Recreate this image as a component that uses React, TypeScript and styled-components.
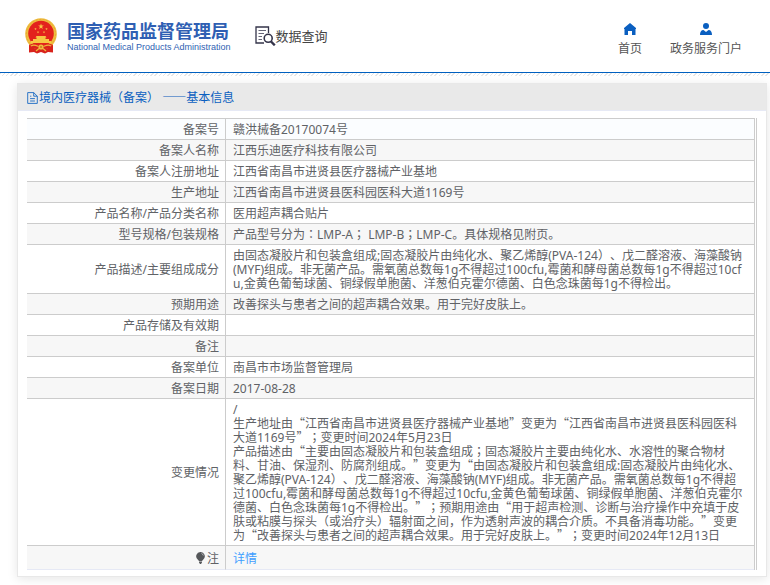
import React from "react";
import styled, { createGlobalStyle } from "styled-components";

const GlobalStyle = createGlobalStyle`
  * { box-sizing: border-box; }
  body {
    margin: 0;
    background: #fff;
    color: #606266;
    font-family: "Noto Sans", "Noto Sans CJK SC", sans-serif;
    font-size: 12px;
    line-height: 14px;
    text-spacing-trim: space-all;
  }
`;

const Header = styled.header`
  display: flex;
  align-items: center;
  height: 73px;
  padding: 0 28px 0 24px;
  border-bottom: 1px solid #0060c0;
`;

const Hatch = styled.div`
  height: 3px;
  background: repeating-linear-gradient(135deg, #e6e6e6 0 1px, #fff 1px 3px);
`;

const Brand = styled.a`
  display: flex;
  align-items: center;
  gap: 9px;
  color: #2f5fb3;
  text-decoration: none;
`;

const BrandText = styled.span`
  display: flex;
  flex-direction: column;
  padding-top: 2px;
  white-space: nowrap;
`;

const BrandName = styled.span`
  font: bold 18px/20px "Noto Sans CJK SC", sans-serif;
`;

const BrandLatin = styled.span`
  font: normal 9px/14px "Liberation Sans", sans-serif;
`;

const Section = styled.h1`
  display: flex;
  align-items: center;
  margin: 0 0 0 24px;
  color: #444;
  font: normal 13px/20px "Noto Sans CJK SC", sans-serif;
  white-space: nowrap;
`;

const Nav = styled.nav`
  display: flex;
  gap: 28px;
  margin: 6px 0 0 auto;
`;

const NavLink = styled.a`
  display: flex;
  flex-direction: column;
  align-items: center;
  gap: 7px;
  color: #555;
  text-decoration: none;
  white-space: nowrap;
`;

const Card = styled.main`
  margin: 7px 3px 8px 17px;
  border: 1px solid #e8e8e8;
  box-shadow: 0 2px 10px rgba(0, 0, 0, 0.1);
`;

const CardTitle = styled.h2`
  display: flex;
  align-items: center;
  gap: 1px;
  height: 27px;
  margin: 0;
  padding: 2px 9px 0;
  background: #e9e9e9;
  border-bottom: 1px solid #e6e9f5;
  color: #0a5fc0;
  font-size: 12px;
  font-weight: normal;
`;

const TableFrame = styled.div`
  margin: 7px 9px 6px;
  padding-right: 1px;
  border-right: 1px solid #ccc;
`;

const Table = styled.table`
  width: 100%;
  table-layout: fixed;
  border-spacing: 0;
  border-top: 1px solid #ccc;
  border-right: 1px solid #ccc;
`;

const Row = styled.tr`
  &:nth-child(even) { background: #f7f7f7; }
  &:first-child { background: #fbfdff; }
  &:last-child > * { height: 24px; border-bottom-color: #e6e9f5; }
`;

const Label = styled.th`
  width: 199px;
  height: 21px;
  padding: 4px 6px 2px;
  border-right: 1px solid #ccc;
  border-bottom: 1px solid #ccc;
  font-weight: normal;
  text-align: right;
`;

const Value = styled.td`
  padding: 4px 6px 2px 7px;
  border-bottom: 1px solid #ccc;
  word-break: break-all;
  white-space: pre-line;
`;

const DetailLink = styled.a`
  color: #409eff;
  text-decoration: none;
`;

const Quote = styled.span`
  font-family: "Noto Sans CJK SC", sans-serif;
  line-height: 0;
`;

const Centered = styled.span`
  font-family: "Noto Sans CJK TC", sans-serif;
  line-height: 0;
`;

// Full-width quotes and centred colons come from the CJK faces.
function Prose({ text }: { text: string }) {
  return (
    <>
      {text.split(/([“”—]+|[：；])/).map((part, i) => {
        if (i % 2 === 0) return part;
        return /[“”—]/.test(part) ? (
          <Quote key={i} lang="zh-CN">{part}</Quote>
        ) : (
          <Centered key={i} lang="zh-TW">{part}</Centered>
        );
      })}
    </>
  );
}

const STAR = "M0-1 .23-.31.95-.31.37.12.59.81 0 .38-.59.81-.37.12-.95-.31-.23-.31Z";

const Emblem = () => (
  <svg width="34" height="36" viewBox="0 0 34 36" aria-hidden="true">
    <path d="M5 24 5 34.5l5-.5 3 1.5 4-1.5 4 1.5 3-1.5 5 .5V24Z" fill="#d9231c" />
    <circle cx="17" cy="16" r="15.8" fill="#efbd3e" />
    <circle cx="17" cy="16" r="14.6" fill="none" stroke="#dfa232" strokeWidth=".7" strokeDasharray="2 1.5" />
    <circle cx="17" cy="15.5" r="12.8" fill="#e3221d" />
    <g fill="#f7c744">
      <path d={STAR} transform="translate(17 8.5) scale(3)" />
      <path d={STAR} transform="translate(11.5 11) scale(1.3)" />
      <path d={STAR} transform="translate(14 14.2) scale(1.3)" />
      <path d={STAR} transform="translate(20 14.2) scale(1.3)" />
      <path d={STAR} transform="translate(22.5 11) scale(1.3)" />
      <path d="M12.5 18h9l1 1.5h-11ZM12.5 19.5h9V21h3.5v2H9v-2h3.5ZM7 23h20v2H7Z" />
    </g>
    <path d="M6 26.5c4-2 6 0 8 1h6c2-1 4-3 8-1l-1 6-4-2-3 3h-6l-3-3-4 2Z" fill="#d9231c" />
    <path d="M7 28c3-2 5-.5 7.5.5M27 28c-3-2-5-.5-7.5.5M12 33l3-2.5M22 33l-3-2.5" fill="none" stroke="#f0b53b" strokeWidth="1.3" />
    <circle cx="17" cy="29" r="2.6" fill="#efbd3e" />
    <circle cx="17" cy="29" r="1" fill="#c9781f" />
  </svg>
);

const SearchDocIcon = () => (
  <svg width="21" height="20" viewBox="0 0 21 20" fill="none" stroke="#34344a" aria-hidden="true">
    <path d="M13.5 7V1H1v16h8" strokeWidth="1.3" />
    <path d="M3.5 4.5h7.5M3.5 7.5H9M3.5 10.5H7M3.5 13.5H7" stroke="#666678" />
    <circle cx="13.2" cy="12.3" r="4" strokeWidth="1.6" />
    <path d="m16 15.5 3.8 3.8" strokeWidth="2.4" />
  </svg>
);

const HomeIcon = () => (
  <svg width="12" height="12" viewBox="0 0 12 12" fill="#0a5fc0" aria-hidden="true">
    <path d="M6 0 0 5v1h.5v6H4V8h4v4h3.5V6h.5V5Z" />
  </svg>
);

const UserIcon = () => (
  <svg width="12" height="12" viewBox="0 0 12 12" fill="#0a5fc0" aria-hidden="true">
    <circle cx="6" cy="3" r="3" />
    <path d="M0 12c0-3 1-5 3.5-5L6 9l2.5-2C11 7 12 9 12 12Z" />
  </svg>
);

const DocIcon = () => (
  <svg width="11" height="12" viewBox="1 1 9 10" fill="none" stroke="#0a5fc0" aria-hidden="true">
    <path d="M1.5 1.5h5l3 3v6h-8ZM6.5 1.5v3h3M3.5 6.5h4M3.5 8.5h4M3.5 4.5h1" strokeWidth=".7" />
  </svg>
);

const BulbMark = styled.svg`
  margin-right: 2px;
  vertical-align: -1px;
`;

const BulbIcon = () => (
  <BulbMark width="9" height="12" viewBox="0 0 9 12" fill="#55575a" aria-hidden="true">
    <path d="M4.5 0a4.2 4.2 0 0 0-2.8 7.4L3 9h3l1.3-1.6A4.2 4.2 0 0 0 4.5 0ZM3 9.6h3v1L5 12H4l-1-1.4Z" />
    <path d="M5.5 1.5c1 .3 1.6 1 1.8 2" fill="none" stroke="#ddd" strokeWidth=".7" />
  </BulbMark>
);

const records: [string, string][] = [
  ["备案号", "赣洪械备20170074号"],
  ["备案人名称", "江西乐迪医疗科技有限公司"],
  ["备案人注册地址", "江西省南昌市进贤县医疗器械产业基地"],
  ["生产地址", "江西省南昌市进贤县医科园医科大道1169号"],
  ["产品名称/产品分类名称", "医用超声耦合贴片"],
  ["型号规格/包装规格", "产品型号分为：LMP-A； LMP-B；LMP-C。具体规格见附页。"],
  [
    "产品描述/主要组成成分",
    "由固态凝胶片和包装盒组成;固态凝胶片由纯化水、聚乙烯醇(PVA-124）、戊二醛溶液、海藻酸钠(MYF)组成。非无菌产品。需氧菌总数每1g不得超过100cfu,霉菌和酵母菌总数每1g不得超过10cfu,金黄色葡萄球菌、铜绿假单胞菌、洋葱伯克霍尔德菌、白色念珠菌每1g不得检出。",
  ],
  ["预期用途", "改善探头与患者之间的超声耦合效果。用于完好皮肤上。"],
  ["产品存储及有效期", ""],
  ["备注", ""],
  ["备案单位", "南昌市市场监督管理局"],
  ["备案日期", "2017-08-28"],
  [
    "变更情况",
    "/\n生产地址由“江西省南昌市进贤县医疗器械产业基地”变更为“江西省南昌市进贤县医科园医科大道1169号”；变更时间2024年5月23日\n产品描述由“主要由固态凝胶片和包装盒组成；固态凝胶片主要由纯化水、水溶性的聚合物材料、甘油、保湿剂、防腐剂组成。”变更为“由固态凝胶片和包装盒组成:固态凝胶片由纯化水、聚乙烯醇(PVA-124）、戊二醛溶液、海藻酸钠(MYF)组成。非无菌产品。需氧菌总数每1g不得超过100cfu,霉菌和酵母菌总数每1g不得超过10cfu,金黄色葡萄球菌、铜绿假单胞菌、洋葱伯克霍尔德菌、白色念珠菌每1g不得检出。”；预期用途由“用于超声检测、诊断与治疗操作中充填于皮肤或粘膜与探头（或治疗头）辐射面之间，作为透射声波的耦合介质。不具备消毒功能。”变更为“改善探头与患者之间的超声耦合效果。用于完好皮肤上。”；变更时间2024年12月13日",
  ],
];

export default function App() {
  return (
    <>
      <GlobalStyle />
      <Header>
        <Brand href="#">
          <Emblem />
          <BrandText>
            <BrandName>国家药品监督管理局</BrandName>
            <BrandLatin>National Medical Products Administration</BrandLatin>
          </BrandText>
        </Brand>
        <Section>
          <SearchDocIcon />
          数据查询
        </Section>
        <Nav>
          <NavLink href="#">
            <HomeIcon />
            首页
          </NavLink>
          <NavLink href="#">
            <UserIcon />
            政务服务门户
          </NavLink>
        </Nav>
      </Header>
      <Hatch />
      <Card>
        <CardTitle>
          <DocIcon />
          <span>
            <Prose text="境内医疗器械（备案） ——基本信息" />
          </span>
        </CardTitle>
        <TableFrame>
          <Table>
            <tbody>
              {records.map(([label, value]) => (
                <Row key={label}>
                  <Label scope="row">{label}</Label>
                  <Value>
                    <Prose text={value} />
                  </Value>
                </Row>
              ))}
              <Row>
                <Label scope="row">
                  <BulbIcon />注
                </Label>
                <Value>
                  <DetailLink href="#">详情</DetailLink>
                </Value>
              </Row>
            </tbody>
          </Table>
        </TableFrame>
      </Card>
    </>
  );
}
